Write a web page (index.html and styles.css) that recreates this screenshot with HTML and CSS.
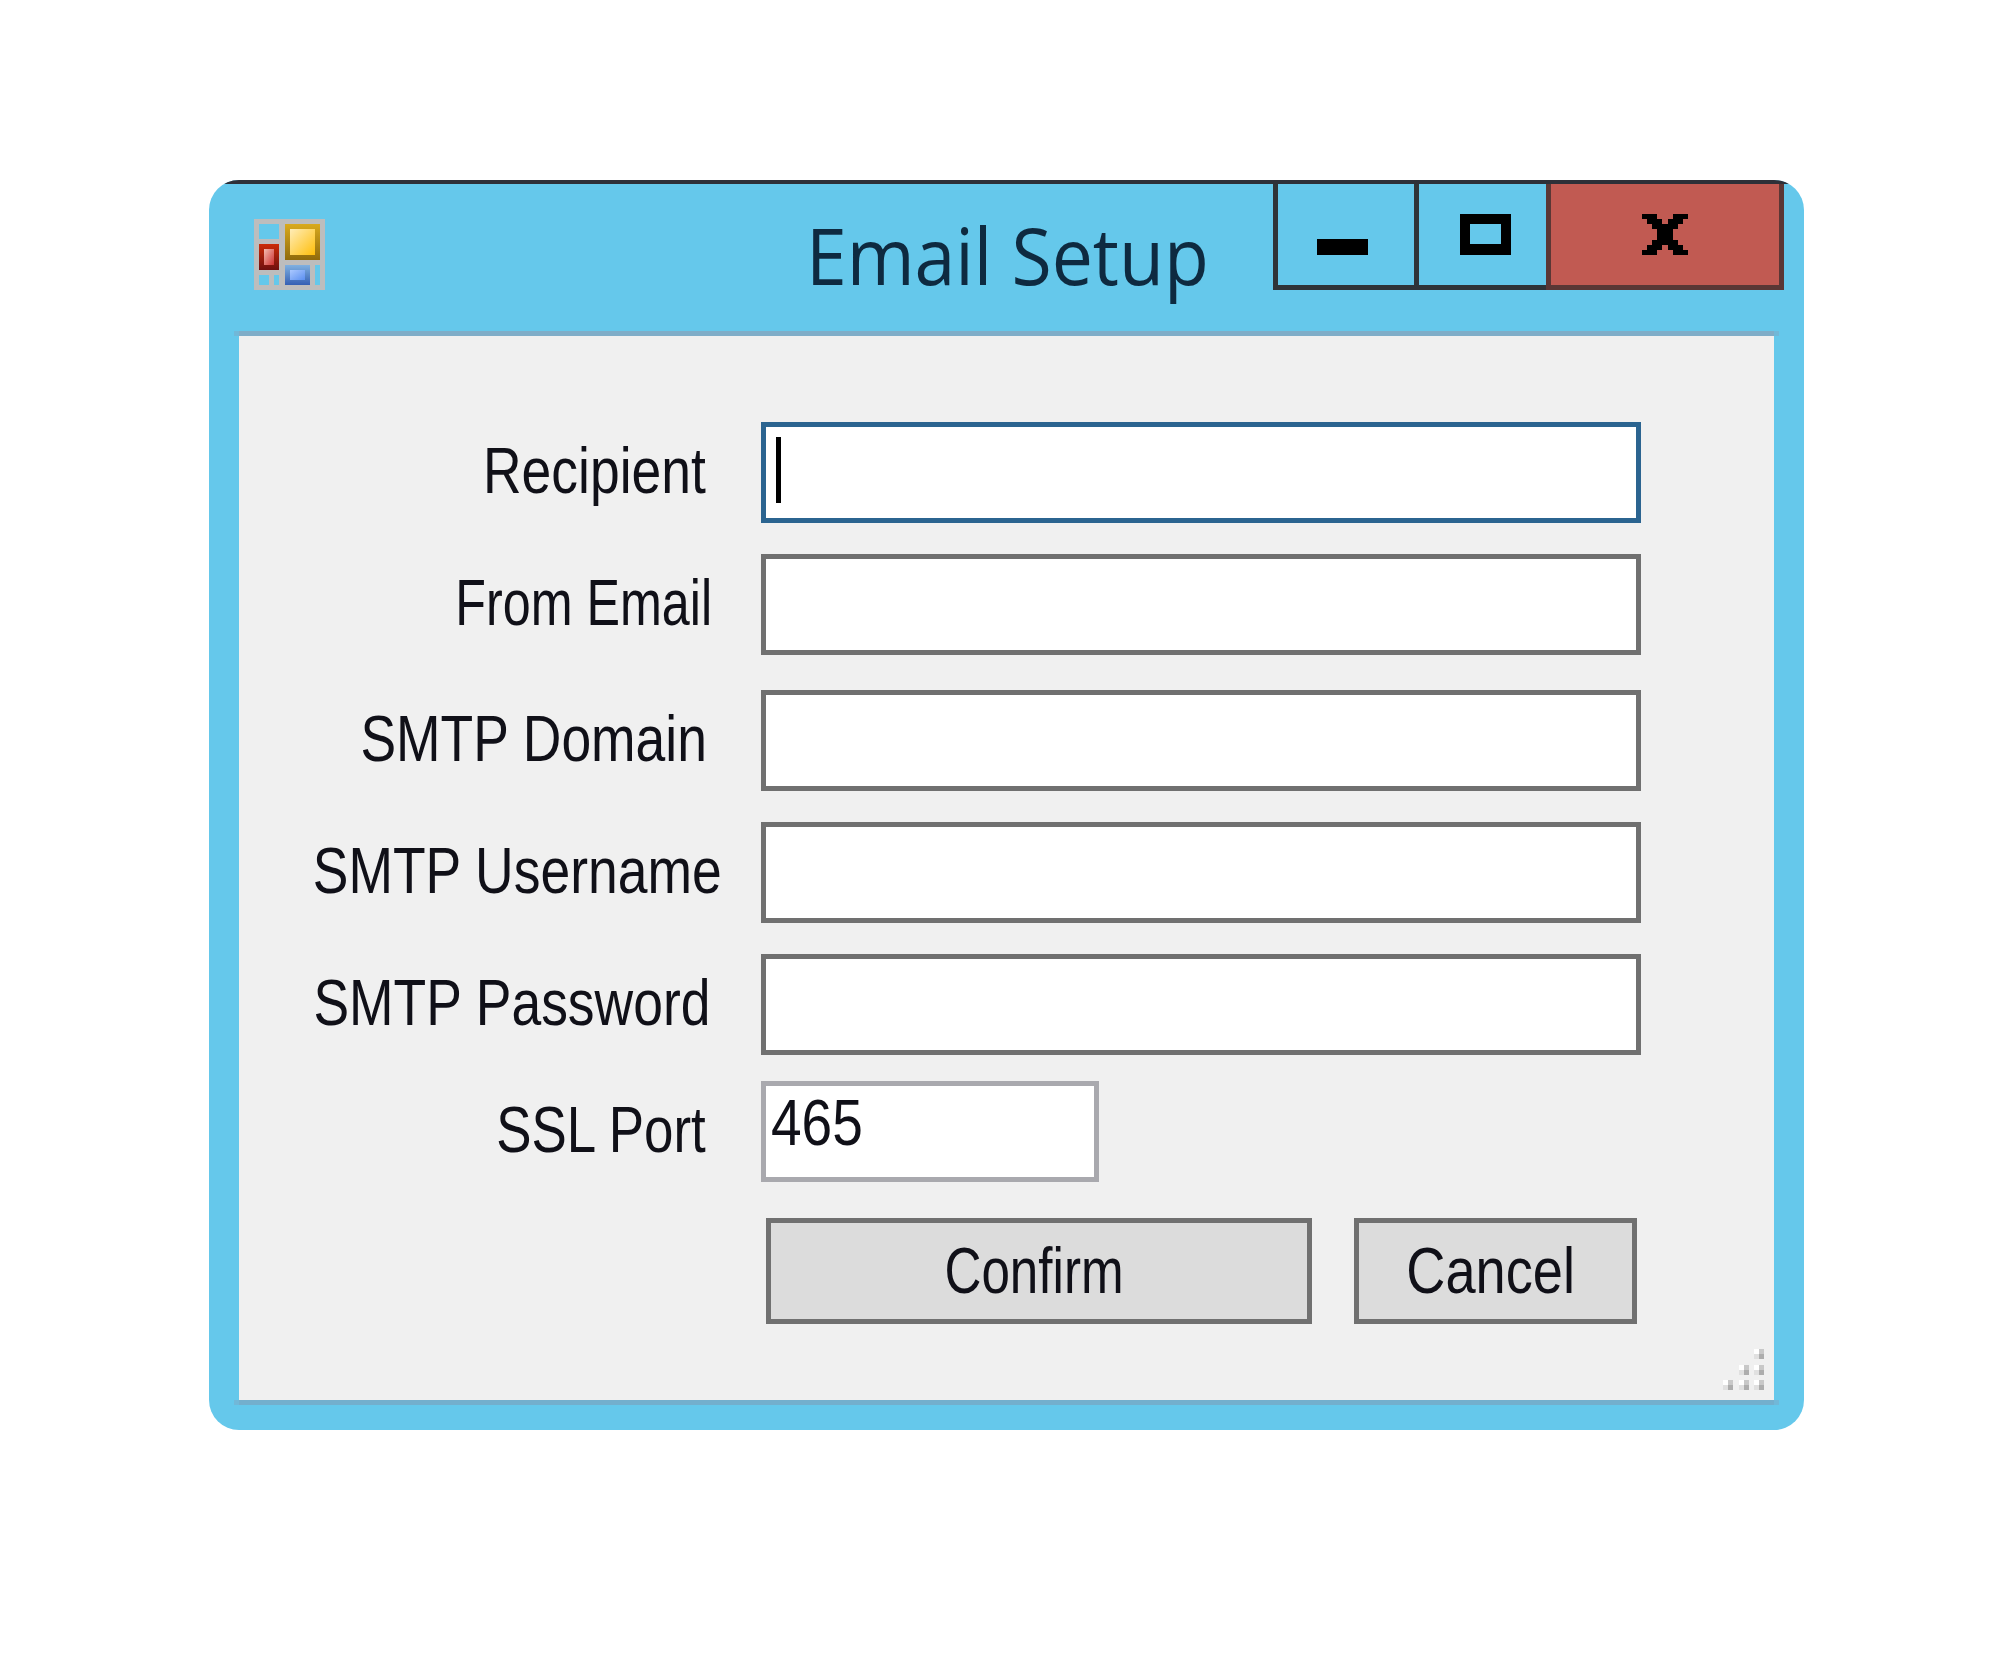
FILE: index.html
```html
<!DOCTYPE html>
<html lang="en">

<head>
  <meta charset="UTF-8" />
  <title>Email Setup</title>
  <link rel="stylesheet" href="styles.css">
</head>

<body>

  <div class="window">
    <div class="topline"></div>

    <!-- Title bar -->
    <div class="titlebar">
      <svg class="app-icon" viewBox="0 0 71 71" shape-rendering="crispEdges">
        <defs>
          <linearGradient id="gold" x1="0" y1="0" x2="0" y2="1">
            <stop offset="0" stop-color="#d9aa1e" />
            <stop offset="1" stop-color="#906a0c" />
          </linearGradient>
          <linearGradient id="gold-in" x1="0" y1="0" x2="1" y2="1">
            <stop offset="0" stop-color="#ffedb8" />
            <stop offset="1" stop-color="#ffbe0a" />
          </linearGradient>
          <linearGradient id="red" x1="0" y1="0" x2="0" y2="1">
            <stop offset="0" stop-color="#cc2c08" />
            <stop offset="1" stop-color="#6e1010" />
          </linearGradient>
          <linearGradient id="red-in" x1="0" y1="0" x2="1" y2="1">
            <stop offset="0" stop-color="#f4bcb0" />
            <stop offset="1" stop-color="#cc3030" />
          </linearGradient>
          <linearGradient id="blue" x1="0" y1="0" x2="0" y2="1">
            <stop offset="0" stop-color="#7fb0e0" />
            <stop offset="1" stop-color="#3560b4" />
          </linearGradient>
          <linearGradient id="blue-in" x1="0" y1="0" x2="1" y2="1">
            <stop offset="0" stop-color="#aac8ff" />
            <stop offset="1" stop-color="#5c90f0" />
          </linearGradient>
        </defs>
        <rect width="71" height="71" fill="#bdbdbd" />
        <rect x="5" y="5" width="20" height="15" fill="#65c8eb" />
        <rect x="5" y="56" width="10" height="10" fill="#65c8eb" />
        <rect x="20" y="56" width="5" height="10" fill="#65c8eb" />
        <rect x="61" y="46" width="5" height="20" fill="#65c8eb" />
        <rect x="31" y="5" width="35" height="36" fill="url(#gold)" />
        <rect x="36" y="10" width="25" height="26" fill="url(#gold-in)" />
        <rect x="5" y="25" width="20" height="26" fill="url(#red)" />
        <rect x="10" y="30" width="10" height="16" fill="url(#red-in)" />
        <rect x="31" y="46" width="25" height="20" fill="url(#blue)" />
        <rect x="36" y="51" width="15" height="10" fill="url(#blue-in)" />
      </svg>
      <div class="title">Email Setup</div>
      <div class="controls">
        <div class="ctl ctl-min">
          <svg class="ico-min" viewBox="0 0 51 16" shape-rendering="crispEdges"><rect width="51" height="16" /></svg>
        </div>
        <div class="ctl ctl-max">
          <svg class="ico-max" viewBox="0 0 51 41" shape-rendering="crispEdges"><path fill-rule="evenodd" d="M0 0H51V41H0ZM10 10V30H41V10Z" /></svg>
        </div>
        <div class="ctl ctl-close">
          <svg class="ico-close" viewBox="0 0 9 8" shape-rendering="crispEdges"><path d="M0 0H3V1H4V2H5V1H6V0H9V1H8V2H7V3H6V5H7V6H8V7H9V8H6V7H5V6H4V7H3V8H0V7H1V6H2V5H3V3H2V2H1V1H0Z" /></svg>
        </div>
      </div>
    </div>

    <div class="rule"></div>

    <!-- Form -->
    <div class="client">
      <div class="row">
        <label class="lbl lbl-recipient"><span>Recipient</span></label>
        <div class="field field-focus"><i class="caret"></i></div>
      </div>
      <div class="row">
        <label class="lbl lbl-from"><span>From Email</span></label>
        <div class="field"></div>
      </div>
      <div class="row row-wide">
        <label class="lbl lbl-domain"><span>SMTP Domain</span></label>
        <div class="field"></div>
      </div>
      <div class="row">
        <label class="lbl lbl-user"><span>SMTP Username</span></label>
        <div class="field"></div>
      </div>
      <div class="row">
        <label class="lbl lbl-pass"><span>SMTP Password</span></label>
        <div class="field"></div>
      </div>
      <div class="row row-tight">
        <label class="lbl lbl-port"><span>SSL Port</span></label>
        <div class="field field-port"><span>465</span></div>
      </div>
      <div class="actions">
        <button class="btn btn-confirm"><span>Confirm</span></button>
        <button class="btn btn-cancel"><span>Cancel</span></button>
      </div>

      <!-- Resize grip -->
      <svg class="grip" viewBox="0 0 41 41" shape-rendering="crispEdges">
        <defs>
          <g id="dot">
            <rect width="5" height="5" fill="#fff" />
            <rect x="5" width="5" height="5" fill="#c8c8c8" />
            <rect y="5" width="5" height="5" fill="#e0e0e0" />
            <rect x="5" y="5" width="5" height="5" fill="#adadad" />
          </g>
        </defs>
        <use href="#dot" x="31" y="0" />
        <use href="#dot" x="16" y="16" />
        <use href="#dot" x="31" y="16" />
        <use href="#dot" x="0" y="31" />
        <use href="#dot" x="16" y="31" />
        <use href="#dot" x="31" y="31" />
      </svg>
    </div>

    <div class="rule rule-bottom"></div>
  </div>

</body>

</html>
```

FILE: styles.css
```css
body {
  margin: 0;
  background-color: #fff;
  font-family: "Liberation Sans", Arial, sans-serif;
  color: #101018;
}

/* Window frame */
.window {
  box-sizing: border-box;
  width: 1595px;
  height: 1250px;
  margin: 180px 0 0 209px;
  padding: 0 25px 25px;
  border-radius: 30px;
  background-color: #65c8eb;
  display: flex;
  flex-direction: column;
  overflow: hidden;
}

.topline {
  height: 4px;
  flex: none;
  margin: 0 -10px;
  background-color: #2e3038;
}

.titlebar {
  height: 147px;
  display: flex;
  align-items: flex-start;
  margin-right: -5px;
}

.app-icon {
  width: 71px;
  height: 71px;
  margin: 35px 0 0 20px;
}

.title {
  margin: 26px 0 0 481px;
  font-family: "Open Sans", sans-serif;
  font-size: 78px;
  line-height: 90px;
  color: #0e2a40;
  transform: scaleX(0.94);
  transform-origin: left center;
}

.controls {
  display: flex;
  height: 106px;
  margin-left: auto;
}

.ctl {
  box-sizing: border-box;
  width: 141px;
  display: flex;
  justify-content: center;
  border-left: 5px solid #2f3438;
  border-bottom: 5px solid #2f3438;
}

.ctl-min {
  padding-right: 8px;
}

.ctl-max {
  width: 132px;
  padding-left: 5px;
}

.ctl-close {
  width: 238px;
  background-color: #c15a52;
  border: 5px solid #5a3735;
  border-top: 0;
}

.ico-min {
  width: 51px;
  height: 16px;
  margin-top: 55px;
}

.ico-max {
  width: 51px;
  height: 41px;
  margin-top: 30px;
}

.ico-close {
  width: 46px;
  height: 41px;
  margin-top: 30px;
}

.rule {
  box-sizing: border-box;
  height: 5px;
  flex: none;
  background-color: #7fadc8;
  border-left: 5px solid #71b8d8;
  border-right: 5px solid #71b8d8;
}

.rule-bottom {
  background-color: #73afcd;
}

/* Client area */
.client {
  flex: 1;
  margin: 0 5px;
  padding-top: 86px;
  background-color: #f0f0f0;
  position: relative;
}

.row {
  display: flex;
  align-items: center;
  height: 101px;
  margin-top: 31px;
}

.row:first-child {
  margin-top: 0;
}

.row-wide {
  margin-top: 35px;
}

.row-tight {
  margin-top: 26px;
}

.lbl {
  box-sizing: border-box;
  flex: none;
  display: flex;
  justify-content: flex-end;
  width: 522px;
  padding-bottom: 3px;
  font-size: 64px;
  line-height: 80px;
  white-space: nowrap;
}

.lbl span,
.btn span,
.field-port span {
  display: inline-block;
  flex: none;
  transform: scaleX(0.86);
}

.lbl span {
  transform-origin: right center;
}

.lbl-recipient { padding-right: 55px; }
.lbl-from { padding-right: 49px; }
.lbl-domain { padding-right: 54px; }
.lbl-user { padding-right: 39px; }
.lbl-pass { padding-right: 51px; }
.lbl-port { padding-right: 55px; }

/* labels differ a little in width, hinted text in the original */
.lbl-recipient span,
.lbl-domain span,
.lbl-user span,
.lbl-pass span { transform: scaleX(0.835); }
.lbl-from span { transform: scaleX(0.785); }
.lbl-port span { transform: scaleX(0.826); }
.btn-confirm span { transform: scaleX(0.80); }
.btn-cancel span { transform: scaleX(0.847); }

.field {
  box-sizing: border-box;
  width: 880px;
  height: 101px;
  background-color: #fff;
  border: 5px solid #707070;
  position: relative;
}

.field-focus {
  border-color: #2b6490;
}

.caret {
  position: absolute;
  left: 10px;
  top: 10px;
  width: 5px;
  height: 66px;
  background-color: #000;
}

.field-port {
  width: 338px;
  border-color: #a9a9ae;
  font-size: 64px;
  line-height: 74px;
}

.field-port span {
  transform-origin: left center;
  margin-left: 5px;
}

/* Buttons */
.actions {
  display: flex;
  gap: 42px;
  margin: 36px 0 0 527px;
}

.btn {
  box-sizing: border-box;
  height: 106px;
  padding: 0 10px 0 0;
  background-color: #dcdcdc;
  border: 5px solid #707070;
  font-family: inherit;
  font-size: 64px;
  color: inherit;
}

.btn-confirm {
  width: 546px;
}

.btn-cancel {
  width: 283px;
}

.grip {
  position: absolute;
  right: 10px;
  bottom: 10px;
  width: 41px;
  height: 41px;
}
```
